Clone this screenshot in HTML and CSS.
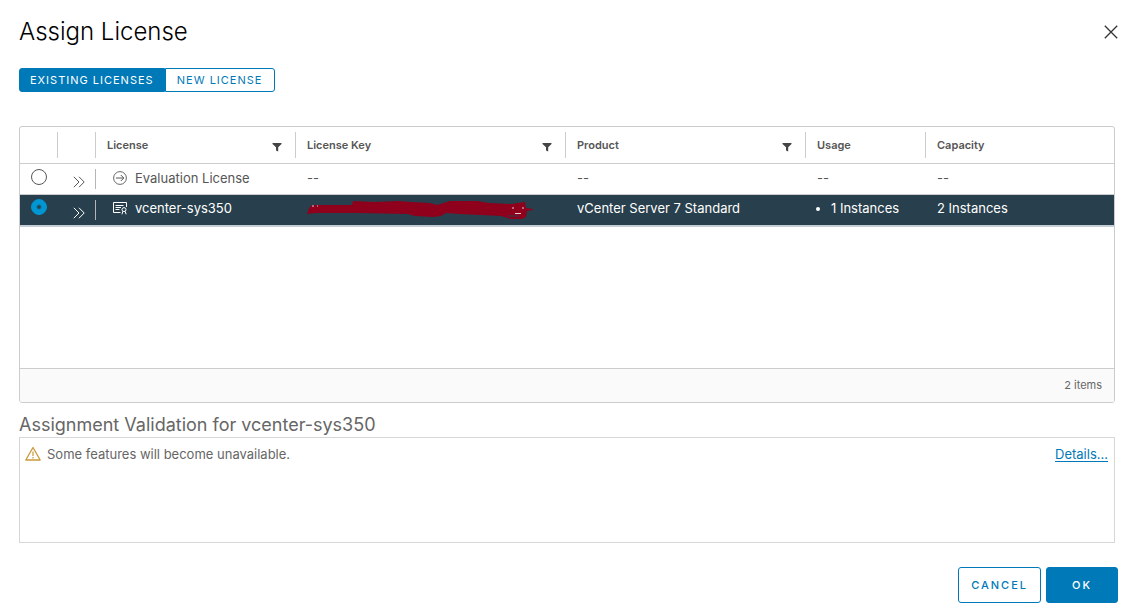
FILE: index.html
```html
<!DOCTYPE html>
<html lang="en">
<head>
<meta charset="utf-8">
<title>Assign License</title>
<link rel="stylesheet" href="styles.css">
</head>
<body>
<svg class="defs" aria-hidden="true">
  <symbol id="filter" viewBox="0 0 10 10"><path d="M0.5 0.9h9v1.2L6.2 5.2v4.2L4 8.4V5.2L0.5 2.1z" fill="currentColor"/></symbol>
  <symbol id="expand" viewBox="0 0 12 12"><path d="M0.8 0.8L6 6L0.8 11.2M6 0.8L11.2 6L6 11.2" fill="none" stroke="currentColor"/></symbol>
</svg>
<main class="dialog">
  <header class="dialog-header">
    <h1 class="title">Assign License</h1>
    <button class="close" type="button" aria-label="Close"><svg width="14" height="14" viewBox="0 0 14 14"><path d="M0.8 0.8l12.4 12.4M13.2 0.8L0.8 13.2" fill="none" stroke="currentColor" stroke-width="1.3"/></svg></button>
  </header>
  <div class="tabs">
    <button class="tab active" type="button">EXISTING LICENSES</button><button class="tab" type="button">NEW LICENSE</button>
  </div>
  <section class="datagrid">
    <div class="grid-body">
      <table class="grid">
        <colgroup><col class="c-icon"><col class="c-icon"><col class="c-license"><col class="c-key"><col class="c-product"><col class="c-usage"><col></colgroup>
        <thead>
          <tr>
            <th><span class="head"></span></th>
            <th><span class="head"></span></th>
            <th><span class="head">License<button class="filter" type="button" aria-label="Filter license"><svg width="10" height="10"><use href="#filter"/></svg></button></span></th>
            <th><span class="head">License Key<button class="filter" type="button" aria-label="Filter license key"><svg width="10" height="10"><use href="#filter"/></svg></button></span></th>
            <th><span class="head">Product<button class="filter" type="button" aria-label="Filter product"><svg width="10" height="10"><use href="#filter"/></svg></button></span></th>
            <th><span class="head">Usage</span></th>
            <th><span class="head">Capacity</span></th>
          </tr>
        </thead>
        <tbody>
          <tr>
            <td class="pick"><input class="radio" type="radio" name="license" aria-label="Evaluation License"></td>
            <td class="more"><span class="divided"><button class="expand" type="button" aria-label="Show details"><svg width="12" height="12"><use href="#expand"/></svg></button></span></td>
            <td><span class="name"><svg width="14" height="14" viewBox="0 0 14 14" fill="none" stroke="currentColor"><circle cx="7" cy="7" r="6.4" stroke-width="0.9"/><path d="M3 7h7.6M7.8 4l3 3l-3 3"/></svg>Evaluation License</span></td>
            <td>--</td>
            <td>--</td>
            <td>--</td>
            <td>--</td>
          </tr>
          <tr class="selected">
            <td class="pick"><input class="radio" type="radio" name="license" aria-label="vcenter-sys350" checked></td>
            <td class="more"><span class="divided"><button class="expand" type="button" aria-label="Show details"><svg width="12" height="12"><use href="#expand"/></svg></button></span></td>
            <td><span class="name"><svg width="14" height="14" viewBox="0 0 14 14" fill="none" stroke="currentColor"><path d="M7.5 11.5h-7v-10h13V6M2.5 4.5h8M2.5 6.5h5.5M2.5 8.5h4"/><circle cx="11" cy="8.6" r="2"/><path d="M9.8 10.4L9 13.3M12.2 10.4l.9 2.9"/></svg>vcenter-sys350</span></td>
            <td><svg class="redaction" width="228" height="22" viewBox="0 0 228 22" role="img" aria-label="Redacted license key"><path d="M5 6L45 6L46 2L68 3L91 2L104 3L123 4L130 6L143 2L170 2L182 4L204 5L218 3L219 9L226 10L226 11L220 12L219 18L215 20L204 20L194 17L174 16L152 15L139 14L134 17L126 18L108 17L101 15L50 14L9 14L0 15L2 9z" fill="#8e001b"/><path d="M5 7h2M10 7h1M205 9h2M215 9h2M208 14.500h6" stroke="#e5cdd1"/><path d="M200 17L212 17" stroke="#28404d"/></svg></td>
            <td>vCenter Server 7 Standard</td>
            <td><ul class="usage"><li>1 Instances</li></ul></td>
            <td>2 Instances</td>
          </tr>
        </tbody>
      </table>
    </div>
    <footer class="grid-footer">2 items</footer>
  </section>
  <h2 class="subtitle">Assignment Validation for vcenter-sys350</h2>
  <section class="validation">
    <svg width="16" height="18" viewBox="0 0 16 18" fill="none" stroke="#c79a3a"><path d="M8 3.500L15.200 16H0.800z" stroke-width="1.300" stroke-linejoin="round"/><path d="M8 7.500v4.500M8 13v1.400" stroke-width="1.200"/></svg>
    <span class="message">Some features will become unavailable.</span>
    <a class="details" href="#">Details...</a>
  </section>
  <footer class="actions">
    <button class="btn" type="button">CANCEL</button>
    <button class="btn primary" type="button">OK</button>
  </footer>
</main>
</body>
</html>
```
FILE: styles.css
```css
* { box-sizing: border-box; }
body { margin: 0; background: #fff; color: #565656; font: 13px/20px Inter, "Open Sans", sans-serif; }
button { font: inherit; color: inherit; background: none; border: 0; padding: 0; cursor: pointer; }
svg { display: block; }
.defs { position: absolute; width: 0; height: 0; }
.dialog { padding: 16px 14px 11px 19px; }
.dialog-header { display: flex; justify-content: space-between; align-items: center; height: 32px; }
.title { margin: 0; font-size: 24px; line-height: 32px; font-weight: 300; color: #000; }
.close { color: #333; }
.tabs { display: flex; margin-top: 20px; }
.tab { height: 24px; min-width: 110px; padding: 0 10px; border: 1px solid #0079b8; border-radius: 0 3px 3px 0; color: #0079b8; font-size: 11px; letter-spacing: 1px; white-space: nowrap; }
.tab.active { background: #0079b8; color: #fff; border-radius: 3px 0 0 3px; }
.datagrid { margin: 34px 3px 0 0; border: 1px solid #ccc; border-radius: 3px; overflow: hidden; }
.grid-body { min-height: 241px; }
.grid { width: 100%; table-layout: fixed; border-collapse: collapse; }
.c-icon { width: 38px; }
.c-license { width: 200px; }
.c-key { width: 270px; }
.c-product { width: 240px; }
.c-usage { width: 120px; }
.grid th { padding: 5px 0; border-bottom: 1px solid #ccc; font-size: 11px; font-weight: 600; text-align: left; }
.head { display: flex; align-items: center; justify-content: space-between; height: 26px; padding: 0 13px 0 11px; border-right: 1px solid #ccc; }
th:last-child .head { border-right: 0; }
.filter { padding-top: 3px; color: #454545; }
.grid td { height: 31px; padding: 0 0 3px 11px; border-bottom: 1px solid #ccc; white-space: nowrap; }
.grid .pick { padding: 0 0 5px 11px; }
.grid .more { padding: 0; }
.divided { display: flex; height: 20px; padding-left: 15px; align-items: flex-end; border-right: 1px solid #b5b5b5; }
.expand { padding-bottom: 1px; }
.radio { appearance: none; display: block; width: 16px; height: 16px; margin: 0; border: 1px solid #565656; border-radius: 50%; }
.radio:checked { border-color: #0095d3; background: radial-gradient(circle, #28404d 1px, #0095d3 3px); }
.name { display: flex; align-items: center; gap: 8px; padding-left: 6px; }
.selected td { background: #28404d; color: #fff; border-bottom: 2px solid #c4ced4; }
.usage { margin: 0; padding-left: 14px; }
.redaction { margin-top: 3px; }
.grid-footer { height: 34px; padding: 6px 12px; border-top: 1px solid #ccc; background: #fafafa; text-align: right; font-size: 11px; color: #666; }
.subtitle { margin: 10px 0 0; font-size: 18px; line-height: 24px; font-weight: 400; color: #666; }
.validation { display: flex; align-items: flex-start; gap: 6px; min-height: 106px; margin-right: 3px; padding: 6px 6px 6px 5px; border: 1px solid #d7d7d7; }
.message { flex: 1; color: #666; }
.details { color: #0079b8; text-underline-offset: 2px; }
.actions { display: flex; justify-content: flex-end; gap: 5px; margin-top: 24px; }
.btn { height: 36px; min-width: 72px; padding: 0 12px; border: 1px solid #0079b8; border-radius: 3px; color: #0079b8; font-size: 11px; font-weight: 500; letter-spacing: 2px; }
.btn.primary { background: #0079b8; color: #fff; }
```
